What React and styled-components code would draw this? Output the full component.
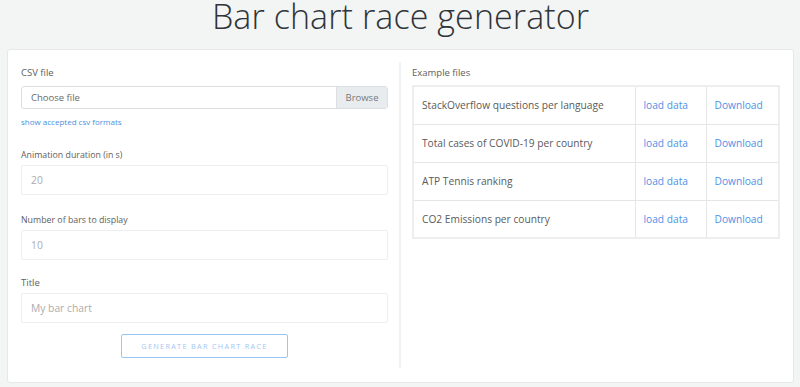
import React from "react";
import styled, { createGlobalStyle } from "styled-components";

const Global = createGlobalStyle`
  html, body { margin: 0; padding: 0; background: #f3f4f4; }
  body { font-family: "Open Sans", "Noto Sans", sans-serif; color: #555; }
  * { box-sizing: border-box; }
`;

const Page = styled.div`
  width: 800px;
  height: 387px;
  display: flex;
  flex-direction: column;
  padding: 0 6px 4px 7px;
`;

const Heading = styled.h1`
  margin: 0;
  height: 49px;
  padding-top: 0;
  text-align: center;
  font-weight: 300;
  font-size: 34px;
  line-height: 32px;
  color: #2f3439;
  letter-spacing: 0.1px;
`;

const Card = styled.div`
  flex: 1;
  background: #fff;
  border: 1px solid #e6e8e8;
  border-radius: 3px;
  padding: 12px 14px 14px 13px;
  display: grid;
  grid-template-columns: 380px 1fr;
`;

const LeftCol = styled.div`
  border-right: 2px solid #f1f2f3;
  padding: 4px 11px 0 0;
  display: flex;
  flex-direction: column;
`;

const RightCol = styled.div`
  padding: 4px 0 0 11px;
`;

const Label = styled.div`
  font-size: ${(p) => p.$fs || 9.5}px;
  line-height: 14px;
  color: #5e5e5e;
  margin-top: ${(p) => p.$mt || 0}px;
  margin-bottom: ${(p) => p.$mb || 3}px;
`;

const FileRow = styled.div`
  display: flex;
  height: 23px;
  border: 1px solid #dcdfe2;
  border-radius: 3px;
  overflow: hidden;
`;

const FileText = styled.div`
  flex: 1;
  padding-left: 9px;
  font-size: 9.5px;
  line-height: 21px;
  color: #6a6a6a;
`;

const Browse = styled.div`
  width: 51px;
  background: #e9ecef;
  border-left: 1px solid #dcdfe2;
  font-size: 9.5px;
  line-height: 21px;
  text-align: center;
  color: #777;
`;

const SmallLink = styled.a`
  font-size: 8px;
  color: #4a90e2;
  margin-top: 7px;
  line-height: 12px;
  text-decoration: none;
`;

const Input = styled.div`
  height: 30px;
  border: 1px solid #eceef0;
  border-radius: 2px;
  padding-left: 9px;
  font-size: 10.3px;
  line-height: 28px;
  color: #adadad;
`;

const ButtonRow = styled.div`
  display: flex;
  justify-content: center;
  margin-top: 11px;
`;

const Button = styled.button`
  width: 167px;
  height: 24px;
  background: #fff;
  border: 1px solid #9cc5f7;
  border-radius: 2px;
  color: #a3c6f2;
  font-family: "Open Sans", sans-serif;
  font-size: 7.3px;
  letter-spacing: 1.3px;
  text-transform: uppercase;
  padding: 0;
`;

const Table = styled.table`
  width: 368px;
  border-collapse: collapse;
  border: 2px solid #eceeef;
  font-size: 10.2px;
`;

const Td = styled.td`
  height: 38px;
  border: 1px solid #e4e6e8;
  padding: 0 0 0 8px;
  color: ${(p) => (p.$link ? "#4d91e8" : "#5a5a5a")};
  width: ${(p) => p.$w || "auto"};
`;

const rows = [
  "StackOverflow questions per language",
  "Total cases of COVID-19 per country",
  "ATP Tennis ranking",
  "CO2 Emissions per country",
];

export default function App() {
  return (
    <>
      <Global />
      <Page>
        <Heading>Bar chart race generator</Heading>
        <Card>
          <LeftCol>
            <Label $mb={6}>CSV file</Label>
            <FileRow>
              <FileText>Choose file</FileText>
              <Browse>Browse</Browse>
            </FileRow>
            <SmallLink>show accepted csv formats</SmallLink>
            <Label $mt={20} $fs={8.8}>Animation duration (in s)</Label>
            <Input>20</Input>
            <Label $mt={18} $fs={8.8}>Number of bars to display</Label>
            <Input>10</Input>
            <Label $mt={16} $fs={9.5}>Title</Label>
            <Input>My bar chart</Input>
            <ButtonRow>
              <Button>Generate bar chart race</Button>
            </ButtonRow>
          </LeftCol>
          <RightCol>
            <Label $mb={5}>Example files</Label>
            <Table>
              <tbody>
                {rows.map((r) => (
                  <tr key={r}>
                    <Td>{r}</Td>
                    <Td $link $w="71px">load data</Td>
                    <Td $link $w="73px">Download</Td>
                  </tr>
                ))}
              </tbody>
            </Table>
          </RightCol>
        </Card>
      </Page>
    </>
  );
}
